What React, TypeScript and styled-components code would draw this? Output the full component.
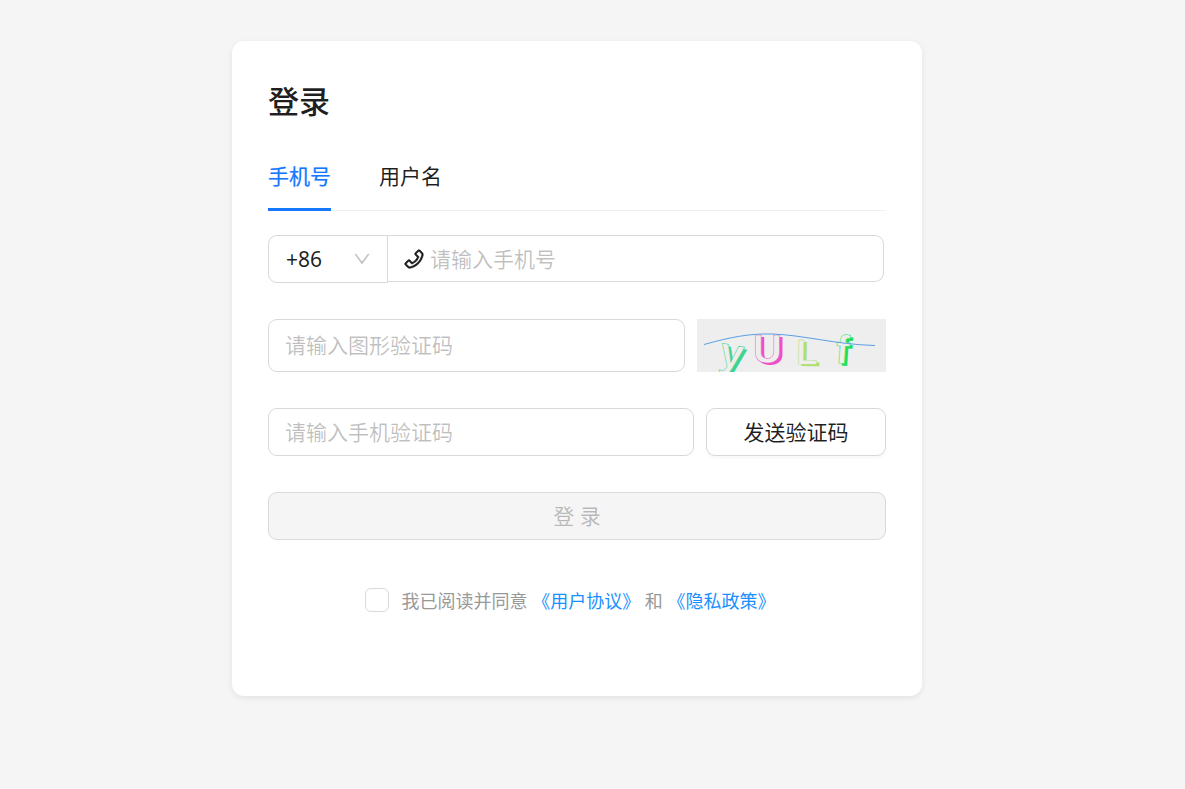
import React, { useState } from 'react';
import styled, { createGlobalStyle } from 'styled-components';
import { AiOutlineDown, AiOutlinePhone } from 'react-icons/ai';

const GlobalStyle = createGlobalStyle`
  *, *::before, *::after { box-sizing: border-box; }
  body {
    margin: 0;
    background: #f5f5f5;
    color: rgba(0, 0, 0, 0.88);
    font-family: "Noto Sans", "Noto Sans CJK SC", sans-serif;
    font-size: 21px;
    line-height: 32px;
  }
  button, input, select { font: inherit; color: inherit; }
`;

const Page = styled.main`
  display: flex;
  justify-content: center;
  padding: 41px 31px 41px 0;
`;

const Card = styled.section`
  width: 100%;
  max-width: 690px;
  padding: 36px 36px 83px;
  border-radius: 12px;
  background: #fff;
  box-shadow: 0 2px 6px rgba(0, 0, 0, 0.08);
`;

const Title = styled.h1`
  margin: 0;
  font-size: 31px;
  font-weight: 500;
  line-height: 48px;
`;

const Tabs = styled.div`
  display: flex;
  gap: 48px;
  margin: 18px 0 24px;
  box-shadow: inset 0 -1px #f0f0f0;
`;

const Tab = styled.button<{ $active: boolean }>`
  padding: 17px 0 16px;
  border: 0;
  border-bottom: 3px solid ${(p) => (p.$active ? '#1677ff' : 'transparent')};
  background: none;
  color: ${(p) => (p.$active ? '#1677ff' : 'inherit')};
  text-shadow: ${(p) => (p.$active ? '0 0 1px rgba(22, 119, 255, 0.4)' : 'none')};
  cursor: pointer;
`;

const Form = styled.form`
  display: flex;
  flex-direction: column;
  gap: 36px;
`;

const Row = styled.div<{ $gap?: number }>`
  display: flex;
  align-items: flex-start;
  gap: ${(p) => p.$gap ?? 0}px;
`;

const SelectBox = styled.div`
  display: grid;
  flex: 0 0 120px;
  align-items: center;
  > * { grid-area: 1 / 1; }
  > svg {
    justify-self: end;
    margin-right: 16px;
    color: rgba(0, 0, 0, 0.25);
    pointer-events: none;
  }
`;

const Select = styled.select`
  width: 100%;
  height: 48px;
  padding: 0 17px;
  border: 1px solid #d9d9d9;
  border-radius: 9px 0 0 9px;
  background: #fff;
  appearance: none;
`;

const PhoneBox = styled.label`
  display: flex;
  flex: 1;
  align-items: center;
  gap: 4px;
  min-width: 0;
  height: 47px;
  margin-right: 2px;
  padding: 0 14px;
  border: 1px solid #d9d9d9;
  border-left: 0;
  border-radius: 0 9px 9px 0;
  > svg { flex: none; }
`;

const inputReset = `
  flex: 1;
  min-width: 0;
  background: #fff;
  outline: 0;
  &::placeholder { color: rgba(0, 0, 0, 0.25); opacity: 1; }
`;

const BareInput = styled.input`
  ${inputReset}
  padding: 0;
  border: 0;
`;

const Input = styled.input<{ $height: number }>`
  ${inputReset}
  height: ${(p) => p.$height}px;
  padding: 0 16px 1px;
  border: 1px solid #d9d9d9;
  border-radius: 9px;
`;

const Captcha = styled.svg`
  flex: 0 0 189px;
  height: 53px;
  background: #eee;
`;

const Button = styled.button`
  height: 48px;
  padding: 0 16px 1px;
  border: 1px solid #d9d9d9;
  border-radius: 9px;
  background: #fff;
  box-shadow: 0 3px 0 rgba(0, 0, 0, 0.02);
  cursor: pointer;
  &:disabled {
    background: #f5f5f5;
    box-shadow: none;
    color: rgba(0, 0, 0, 0.25);
    cursor: not-allowed;
  }
`;

const SendButton = styled(Button)`
  flex: 0 0 180px;
`;

const Agreement = styled.div`
  display: flex;
  align-items: flex-start;
  justify-content: center;
  margin-top: 12px;
  color: #999;
  font-size: 18px;
  line-height: 24px;
`;

const AgreementText = styled.label`
  padding: 1px 13px 0 12px;
`;

const Checkbox = styled.input`
  width: 24px;
  height: 24px;
  margin: 0;
  border: 1px solid #d9d9d9;
  border-radius: 6px;
  background: #fff;
  appearance: none;
  &:checked { border-color: #1677ff; background: #1677ff; }
`;

const Link = styled.a`
  color: #1890ff;
  text-decoration: none;
`;

type Glyph = {
  char: string;
  x: number;
  y: number;
  size: number;
  rotate: number;
  color: string;
  family: string;
};

const glyphs: Glyph[] = [
  { char: 'y', x: 21, y: 46, size: 42, rotate: 10, color: '#3dd28d', family: 'Liberation Sans' },
  { char: 'U', x: 56, y: 44, size: 40, rotate: 0, color: '#ee4fc8', family: 'Liberation Sans' },
  { char: 'L', x: 99, y: 45, size: 35, rotate: 1, color: '#aee06c', family: 'Liberation Sans' },
  { char: 'f', x: 138, y: 44, size: 40, rotate: 4, color: '#1fe052', family: 'Liberation Sans' },
];

function CaptchaImage() {
  return (
    <Captcha viewBox="0 0 189 53" role="img" aria-label="图形验证码">
      {glyphs.map((g) => (
        <g
          key={g.char}
          transform={`translate(${g.x} ${g.y}) rotate(${g.rotate})`}
          fontFamily={g.family}
          fontSize={g.size}
          fontWeight="700"
        >
          <text x="3" y="2" fill={g.color}>{g.char}</text>
          <text fill="#eee" stroke={g.color} strokeWidth="0.5">
            {g.char}
          </text>
        </g>
      ))}
      <path d="M7 25.5C34 18 52 14.5 75 15C107 16 138 25.5 178 26.5" fill="none" stroke="#5a9fe4" />
    </Captcha>
  );
}

export default function App() {
  const [tab, setTab] = useState('手机号');
  return (
    <>
      <GlobalStyle />
      <Page>
        <Card>
          <Title>登录</Title>
          <Tabs role="tablist">
            {['手机号', '用户名'].map((name) => (
              <Tab
                key={name}
                type="button"
                role="tab"
                aria-selected={tab === name}
                $active={tab === name}
                onClick={() => setTab(name)}
              >
                {name}
              </Tab>
            ))}
          </Tabs>
          <Form onSubmit={(e) => e.preventDefault()}>
            <Row>
              <SelectBox>
                <Select aria-label="国家区号">
                  <option>+86</option>
                </Select>
                <AiOutlineDown size={20} />
              </SelectBox>
              <PhoneBox>
                <AiOutlinePhone size={24} strokeWidth={20} />
                <BareInput type="tel" aria-label="手机号" placeholder="请输入手机号" />
              </PhoneBox>
            </Row>
            <Row $gap={12}>
              <Input $height={53} aria-label="图形验证码" placeholder="请输入图形验证码" />
              <CaptchaImage />
            </Row>
            <Row $gap={12}>
              <Input $height={48} aria-label="手机验证码" placeholder="请输入手机验证码" />
              <SendButton type="button">发送验证码</SendButton>
            </Row>
            <Button type="submit" disabled>登 录</Button>
            <Agreement>
              <Checkbox type="checkbox" id="agree" />
              <AgreementText htmlFor="agree">
                我已阅读并同意 <Link href="#terms">《用户协议》</Link> 和 <Link href="#privacy">《隐私政策》</Link>
              </AgreementText>
            </Agreement>
          </Form>
        </Card>
      </Page>
    </>
  );
}
